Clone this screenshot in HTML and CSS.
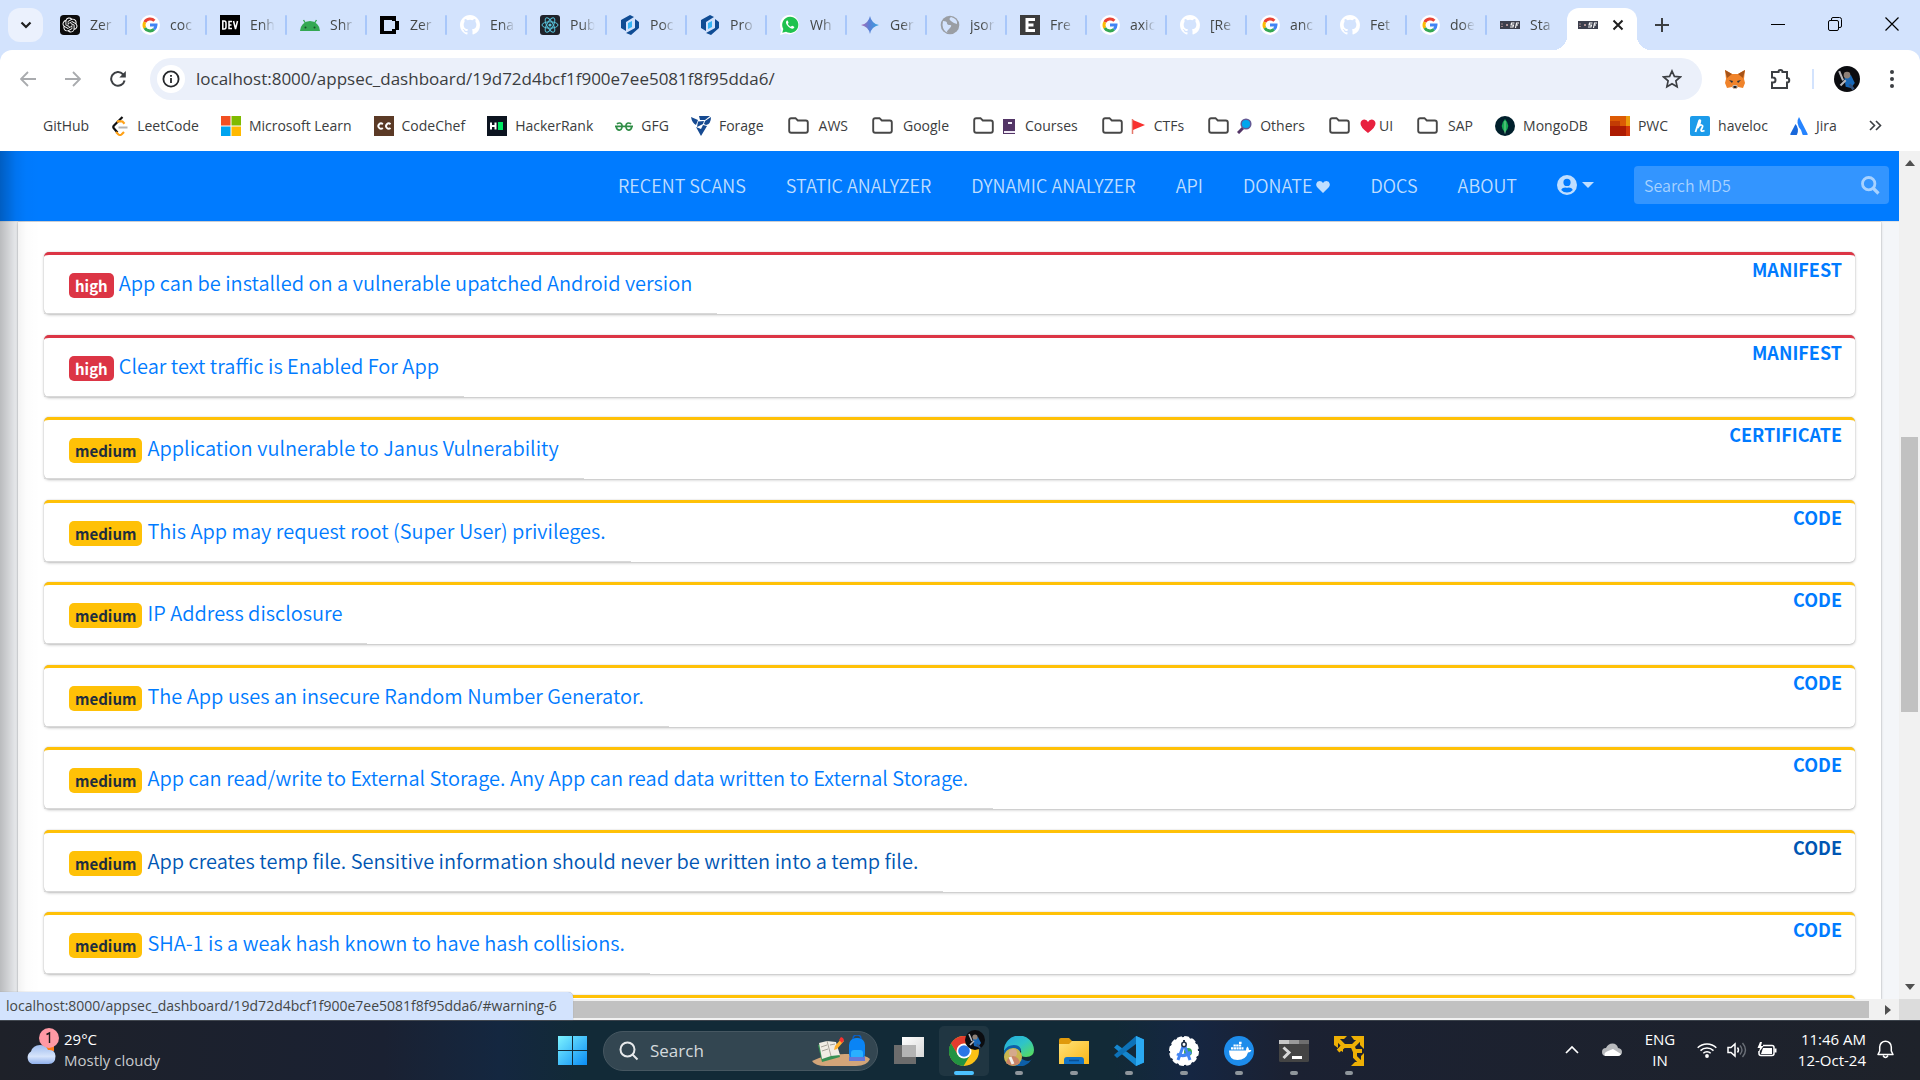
FILE: index.html
```html
<!DOCTYPE html>
<html lang="en">
<head>
<meta charset="utf-8">
<title>Static Analysis</title>
<link rel="stylesheet" href="styles.css">
</head>
<body>
<svg class="defs" aria-hidden="true">
  <defs>
    <linearGradient id="gem" x1="0" x2="1"><stop offset="0" stop-color="#b06ab3"/><stop offset=".45" stop-color="#5b7fd6"/><stop offset="1" stop-color="#35a5e0"/></linearGradient>
    <linearGradient id="win" x1="0" y1="0" x2="1" y2="1"><stop offset="0" stop-color="#7df3ff"/><stop offset="1" stop-color="#0a8cf5"/></linearGradient>
    <linearGradient id="edge" x1="0" y1="0" x2="1" y2="1"><stop offset="0" stop-color="#22a7e0"/><stop offset=".5" stop-color="#2fc4c8"/><stop offset="1" stop-color="#5ddf4c"/></linearGradient>
    <linearGradient id="fold" x1="0" y1="0" x2="1" y2="1"><stop offset="0" stop-color="#ffe27a"/><stop offset="1" stop-color="#fbb615"/></linearGradient>
    <linearGradient id="cloud" x1="0" y1="0" x2="0" y2="1"><stop offset="0" stop-color="#9fbdee"/><stop offset=".6" stop-color="#d6e4fb"/><stop offset="1" stop-color="#8fb0ec"/></linearGradient>
    <linearGradient id="tv" x1="0" y1="0" x2="1" y2="1"><stop offset="0" stop-color="#fff"/><stop offset="1" stop-color="#d8d8d8"/></linearGradient>
  </defs>
  <symbol id="google" viewBox="0 0 20 20"><circle cx="10" cy="10" r="10" fill="#fff"/><g fill="none" stroke-width="3"><path d="M14.4 5.8A6 6 0 0 0 4.8 7.1" stroke="#ea4335"/><path d="M4.8 7.1a6 6 0 0 0 0 5.8" stroke="#fbbc05"/><path d="M4.8 12.9a6 6 0 0 0 9.2 1.5" stroke="#34a853"/><path d="M10 10h6a6 6 0 0 1-2 4.4" stroke="#4285f4"/></g></symbol>
  <symbol id="github" viewBox="0 0 16 16"><path fill="#fff" d="M8 0C3.580 0 0 3.580 0 8c0 3.540 2.290 6.530 5.470 7.590.4.070.550-.170.550-.380 0-.190-.010-.820-.010-1.490-2.010.370-2.530-.490-2.690-.940-.090-.230-.480-.940-.820-1.130-.280-.150-.680-.520-.010-.530.630-.010 1.080.580 1.230.820.720 1.210 1.870.870 2.330.660.070-.520.280-.870.510-1.070-1.780-.2-3.640-.890-3.640-3.950 0-.870.310-1.590.820-2.150-.080-.2-.360-1.020.080-2.120 0 0 .670-.210 2.200.820a7.600 7.600 0 0 1 4 0c1.530-1.040 2.200-.820 2.200-.820.440 1.100.160 1.920.080 2.120.510.560.820 1.270.820 2.150 0 3.070-1.870 3.750-3.650 3.950.290.250.540.730.540 1.480 0 1.070-.010 1.930-.010 2.200 0 .210.150.460.550.380A8 8 0 0 0 16 8c0-4.420-3.580-8-8-8z"/></symbol>
  <symbol id="auth" viewBox="0 0 20 20"><path fill="#0f4c94" d="M1 5 10 0l4 2-8 5v9l-5-3zM19 13l-8 7-5-2 9-5V4l4 3z"/><path fill="#36b5f5" d="m8 8 4-2v6l-4 2z"/></symbol>
  <symbol id="mobsf" viewBox="0 0 20 8"><rect width="20" height="8" fill="#3c3f4d"/><path d="M2 2.500v1M2 5v1M6 4h2" stroke="#d6b0b0" stroke-width="1.300"/><path d="M14.500 2h-3l-.5 2h2.500l-.5 2h-3M15.500 7l1-5h2.500M16 4h2" stroke="#fff" stroke-width="1.100" fill="none"/></symbol>
  <symbol id="folder" viewBox="0 0 21 17"><path d="M1.200 3.200q0-2 2-2h4.300l2.300 2.300h8q2 0 2 2v8.300q0 2-2 2H3.200q-2 0-2-2z" fill="none" stroke="#474747" stroke-width="1.900"/></symbol>
  <symbol id="man" viewBox="0 0 20 20"><circle cx="10" cy="10" r="10" fill="#0b0c10"/><path d="M8 9l5-2 3 6-3 4-4-1z" fill="#1868b8"/><circle cx="10" cy="7" r="2.600" fill="#8d8078"/><path d="M4 4l3 7M5 15l4-4" stroke="#b8b8bd" stroke-width="1.600"/><path d="M12 14l3 4" stroke="#35537e" stroke-width="2"/></symbol>
</svg>

<header class="browser">
  <div class="tabstrip">
    <button class="tabsearch" aria-label="Search tabs"><svg width="12" height="8" viewBox="0 0 12 8"><path d="m1.500 1.500 4.500 4.500 4.500-4.500" fill="none" stroke="#1f1f1f" stroke-width="2.200"/></svg></button>
    <nav class="tabs" aria-label="Tabs">
      <button class="tab"><svg class="fav" viewBox="0 0 32 32"><rect width="32" height="32" rx="6" fill="#0c0c0c"/><path transform="translate(4 4)" fill="#fff" d="M22.2819 9.8211a5.9847 5.9847 0 0 0-.5157-4.9108 6.0462 6.0462 0 0 0-6.5098-2.9A6.0651 6.0651 0 0 0 4.9807 4.1818a5.9847 5.9847 0 0 0-3.9977 2.9 6.0462 6.0462 0 0 0 .7427 7.0966 5.98 5.98 0 0 0 .511 4.9107 6.051 6.051 0 0 0 6.5146 2.9001A5.9847 5.9847 0 0 0 13.2599 24a6.0557 6.0557 0 0 0 5.7718-4.2058 5.9894 5.9894 0 0 0 3.9977-2.9001 6.0557 6.0557 0 0 0-.7475-7.0729zm-9.022 12.6081a4.4755 4.4755 0 0 1-2.8764-1.0408l.1419-.0804 4.7783-2.7582a.7948.7948 0 0 0 .3927-.6813v-6.7369l2.02 1.1686a.071.071 0 0 1 .038.052v5.5826a4.504 4.504 0 0 1-4.4945 4.4944zm-9.6607-4.1254a4.4708 4.4708 0 0 1-.5346-3.0137l.142.0852 4.783 2.7582a.7712.7712 0 0 0 .7806 0l5.8428-3.3685v2.3324a.0804.0804 0 0 1-.0332.0615L9.74 19.9502a4.4992 4.4992 0 0 1-6.1408-1.6464zM2.3408 7.8956a4.485 4.485 0 0 1 2.3655-1.9728V11.6a.7664.7664 0 0 0 .3879.6765l5.8144 3.3543-2.0201 1.1685a.0757.0757 0 0 1-.071 0l-4.8303-2.7865A4.504 4.504 0 0 1 2.3408 7.872zm16.5963 3.8558L13.1038 8.364 15.1192 7.2a.0757.0757 0 0 1 .071 0l4.8303 2.7913a4.4944 4.4944 0 0 1-.6765 8.1042v-5.6772a.79.79 0 0 0-.407-.667zm2.0107-3.0231l-.142-.0852-4.7735-2.7818a.7759.7759 0 0 0-.7854 0L9.409 9.2297V6.8974a.0662.0662 0 0 1 .0284-.0615l4.8303-2.7866a4.4992 4.4992 0 0 1 6.6802 4.66zM8.3065 12.863l-2.02-1.1638a.0804.0804 0 0 1-.038-.0567V6.0742a4.4992 4.4992 0 0 1 7.3757-3.4537l-.142.0805L8.704 5.459a.7948.7948 0 0 0-.3927.6813zm1.0976-2.3654l2.602-1.4998 2.6069 1.4998v2.9994l-2.5974 1.4997-2.6067-1.4997Z"/></svg><span>Zer</span></button>
      <button class="tab"><svg class="fav"><use href="#google"/></svg><span>coc</span></button>
      <button class="tab"><svg class="fav" viewBox="0 0 20 20"><rect width="20" height="20" fill="#000"/><path d="M2.800 6v8h1.400q1.800 0 1.800-2V8q0-2-1.800-2zM12 6.500H9v7h3M9 10h2.500M13.500 6l2 8 2-8" fill="none" stroke="#fff" stroke-width="1.500"/></svg><span>Enh</span></button>
      <button class="tab"><svg class="fav" viewBox="0 0 20 20"><path d="M0 16a10 10 0 0 1 20 0z" fill="#34a853"/><path d="m3.500 5 2.500 4M16.500 5 14 9" stroke="#34a853" stroke-width="1.400"/><circle cx="5.500" cy="12.500" r="1" fill="#174d2a"/><circle cx="14.500" cy="12.500" r="1" fill="#174d2a"/></svg><span>Shr</span></button>
      <button class="tab"><svg class="fav" viewBox="0 0 20 20"><path fill="#000" fill-rule="evenodd" d="M0 1h16v5h3v9h-3v4H0zM4 5v11h8v-2h3V6h-3V5z"/></svg><span>Zer</span></button>
      <button class="tab"><svg class="fav"><use href="#github"/></svg><span>Ena</span></button>
      <button class="tab"><svg class="fav" viewBox="0 0 20 20"><rect width="20" height="20" rx="3" fill="#20232a"/><g fill="none" stroke="#58c4dc"><ellipse cx="10" cy="10" rx="8" ry="3.200"/><ellipse cx="10" cy="10" rx="8" ry="3.200" transform="rotate(60 10 10)"/><ellipse cx="10" cy="10" rx="8" ry="3.200" transform="rotate(120 10 10)"/></g><circle cx="10" cy="10" r="1.600" fill="#58c4dc"/></svg><span>Pub</span></button>
      <button class="tab"><svg class="fav"><use href="#auth"/></svg><span>Poc</span></button>
      <button class="tab"><svg class="fav"><use href="#auth"/></svg><span>Pro</span></button>
      <button class="tab"><svg class="fav" viewBox="0 0 20 20"><path fill="#fff" d="M10 0a9.700 9.700 0 1 1-4.500 18.600L0 20l1.500-5A9.800 9.800 0 0 1 10 0z"/><path fill="#1fc24e" d="M10 1.700a8.100 8.100 0 1 1-4 15L2.300 17.700l1-3.600A8.200 8.200 0 0 1 10 1.700z"/><path d="M6.800 5.500c-1.500 1.300-1 3.500 1.200 5.800s4.600 3.300 6 1.700c.6-.9.300-1.300-.3-1.600l-1.500-.7c-.6-.2-.8.900-1.500 1-1.300-.5-2.300-1.500-2.900-2.700.2-.7.900-.9.700-1.400L7.800 5.800c-.3-.5-.6-.5-1-.3z" fill="#fff"/></svg><span>Wh</span></button>
      <button class="tab"><svg class="fav" viewBox="0 0 20 20"><path fill="url(#gem)" d="M10 1q1.500 7.500 9 9-7.500 1.500-9 9-1.500-7.500-9-9 7.500-1.500 9-9z"/></svg><span>Ger</span></button>
      <button class="tab"><svg class="fav" viewBox="0 0 20 20"><circle cx="10" cy="10" r="9.300" fill="#9a9ea4"/><path d="M3 6q4 0 4 2t3 2-1 4-1 4Q3 16 2.500 10zM11 2q-3 2 0 4t3 2 3 1Q18 4 11 2z" fill="#d3e3fd"/></svg><span>jsor</span></button>
      <button class="tab"><svg class="fav" viewBox="0 0 20 20"><rect width="20" height="20" fill="#3c3c3c"/><path d="M15 4.500H7v11h8M7 10h6.500" stroke="#fff" stroke-width="3" fill="none"/></svg><span>Fre</span></button>
      <button class="tab"><svg class="fav"><use href="#google"/></svg><span>axic</span></button>
      <button class="tab"><svg class="fav"><use href="#github"/></svg><span>[Re</span></button>
      <button class="tab"><svg class="fav"><use href="#google"/></svg><span>anc</span></button>
      <button class="tab"><svg class="fav"><use href="#github"/></svg><span>Fet</span></button>
      <button class="tab"><svg class="fav"><use href="#google"/></svg><span>doe</span></button>
      <button class="tab last"><svg class="fav"><use href="#mobsf"/></svg><span>Sta</span></button>
      <button class="tab active" aria-label="Static Analysis"><svg class="fav"><use href="#mobsf"/></svg><svg width="12" height="12" viewBox="0 0 12 12"><path d="m1.500 1.500 9 9m0-9-9 9" stroke="#1f1f1f" stroke-width="2"/></svg></button>
    </nav>
    <button class="newtab" aria-label="New tab"><svg width="14" height="14" viewBox="0 0 14 14"><path d="M7 0v14M0 7h14" stroke="#3c3f43" stroke-width="2"/></svg></button>
    <div class="winctl">
      <button aria-label="Minimize"><svg width="14" height="14" viewBox="0 0 14 14"><path d="M0 7.500h14" stroke="#000"/></svg></button>
      <button aria-label="Restore"><svg width="14" height="14" viewBox="0 0 14 14"><path d="M3.500 3V2q0-1.500 1.500-1.500h6.500q2 0 2 2V9q0 1.500-1.500 1.500h-1" fill="none" stroke="#000"/><rect x=".5" y="3.500" width="10" height="10" rx="1.500" fill="none" stroke="#000"/></svg></button>
      <button aria-label="Close"><svg width="14" height="14" viewBox="0 0 14 14"><path d="m.5.5 13 13m0-13-13 13" stroke="#000" stroke-width="1.200"/></svg></button>
    </div>
  </div>

  <div class="toolbar">
    <button class="tool" aria-label="Back"><svg width="16" height="16" viewBox="0 0 16 16"><path d="M16 8H1.500M8 1 1 8l7 7" fill="none" stroke="#a9abae" stroke-width="1.800"/></svg></button>
    <button class="tool" aria-label="Forward"><svg width="16" height="16" viewBox="0 0 16 16"><path d="M0 8h14.500M8 1l7 7-7 7" fill="none" stroke="#a9abae" stroke-width="1.800"/></svg></button>
    <button class="tool" aria-label="Reload"><svg width="16" height="16" viewBox="0 0 16 16"><path d="M14.600 9.500A6.800 6.800 0 1 1 13 3.300l1.500 1.700" fill="none" stroke="#3c3f43" stroke-width="2"/><path d="M15.800 0v6.500H9.300z" fill="#3c3f43"/></svg></button>
    <div class="omnibox">
      <button class="siteinfo" aria-label="Site information"><svg width="18" height="18" viewBox="0 0 18 18"><circle cx="9" cy="9" r="7.600" fill="none" stroke="#26282b" stroke-width="1.800"/><path d="M9 8v5M9 5v1.800" stroke="#26282b" stroke-width="1.800"/></svg></button>
      <input class="url" aria-label="Address" value="localhost:8000/appsec_dashboard/19d72d4bcf1f900e7ee5081f8f95dda6/">
      <button class="star" aria-label="Bookmark this page"><svg width="20" height="20" viewBox="0 0 20 20"><path d="m10 2 2.400 5.400 5.900.6-4.400 3.900 1.200 5.800L10 14.700l-5.100 3 1.200-5.800L1.700 8l5.900-.6z" fill="none" stroke="#3c3f43" stroke-width="1.700"/></svg></button>
    </div>
    <div class="extensions">
      <button class="wallet" aria-label="Wallet"><svg width="22" height="20" viewBox="0 0 22 20"><path d="m1 1 7 4h6l7-4-1 9 1 4-2 5-5-1-2 2h-2l-2-2-5 1-2-5 1-4z" fill="#f0832a"/><path d="m1 1 7 4-5 4zM21 1l-7 4 5 4z" fill="#a65318"/><path d="m5 11 4 1-1 2zM17 11l-4 1 1 2z" fill="#26313e"/><path d="M9 16h4l1 2-2 2h-2l-2-2z" fill="#c9b9ac"/><path d="M9.500 17h3v2h-3z" fill="#20242b"/></svg></button>
      <button aria-label="Extensions"><svg width="22" height="22" viewBox="0 0 22 22"><path d="M2 4h6.500a2 2 0 0 1 4 0H17v6a2 2 0 0 1 0 4.500V20H2v-5.500h1a2.200 2.200 0 0 0 0-5H2z" fill="none" stroke="#3c3f43" stroke-width="2"/></svg></button>
      <span class="divider"></span>
      <button aria-label="Profile"><svg width="26" height="26"><use href="#man"/></svg></button>
      <button class="menu" aria-label="Menu"><svg width="6" height="20" viewBox="0 0 6 20"><g fill="#3c3f43"><circle cx="3" cy="3" r="2"/><circle cx="3" cy="10" r="2"/><circle cx="3" cy="17" r="2"/></g></svg></button>
    </div>
  </div>

  <nav class="bookmarks" aria-label="Bookmarks">
    <a href="#">GitHub</a>
    <a href="#"><svg width="18" height="20" viewBox="0 0 18 20"><path d="M11.500 1 3 9.500q-1.500 1.500 0 3l3.500 4" fill="none" stroke="#111" stroke-width="2.200"/><path d="m6 6 1.500-.8 4 .3 2 2.300M5 16l2.500 2.500q1.500 1.200 3 0l2.500-2.500" fill="none" stroke="#ffa116" stroke-width="2.200"/><path d="M7.500 11.500h9" stroke="#b3b3b3" stroke-width="2"/></svg>LeetCode</a>
    <a href="#"><svg width="20" height="20" viewBox="0 0 20 20"><path fill="#f25022" d="M0 0h9.500v9.500H0z"/><path fill="#7fba00" d="M10.500 0H20v9.500h-9.500z"/><path fill="#00a4ef" d="M0 10.500h9.500V20H0z"/><path fill="#ffb900" d="M10.500 10.500H20V20h-9.500z"/></svg>Microsoft Learn</a>
    <a href="#"><svg width="20" height="20" viewBox="0 0 20 20"><path fill="#5b3a26" d="M0 0h20v20H0z"/><path d="M8.800 8.200a2.600 2.600 0 1 0 0 3.800M16.500 8.200a2.600 2.600 0 1 0 0 3.800" fill="none" stroke="#fff" stroke-width="1.900"/></svg>CodeChef</a>
    <a href="#"><svg width="20" height="20" viewBox="0 0 20 20"><path fill="#0c1420" d="M0 0h20v20H0z"/><path d="M4 6.500v7M8.500 6.500v7M4 10h4.500" stroke="#fff" stroke-width="2"/><path fill="#00ea64" d="M11 6h5v8h-5z"/></svg>HackerRank</a>
    <a href="#"><svg width="18" height="20" viewBox="0 0 20 20"><path d="M0 10.500h20M2 7.500q5.500-2.500 6 2.500-.5 5-3.500 4.500Q1.500 14 1.500 10.500M18 7.500q-5.500-2.500-6 2.500.5 5 3.500 4.500 3-.5 3-4" fill="none" stroke="#2f8d46" stroke-width="1.900"/></svg>GFG</a>
    <a href="#"><svg width="20" height="20" viewBox="0 0 20 20"><path fill="#164a91" d="M0 1 7 4 5 9Q1 7 0 1zM8 0h11l-5 4-5 0zM7 5.500l6-.5-1 3-6 3zM14 5l6-4q0 7-5 8l-2-1zM5 11l5 2 2-4 4 1-6 10z"/></svg>Forage</a>
    <a href="#" class="dir"><svg width="21" height="17"><use href="#folder"/></svg>AWS</a>
    <a href="#" class="dir"><svg width="21" height="17"><use href="#folder"/></svg>Google</a>
    <a href="#" class="dir emo"><svg width="21" height="17"><use href="#folder"/></svg><svg width="15" height="16" viewBox="0 0 15 16"><path fill="#533566" d="M1 1h12v15H1z"/><path fill="#f0eaf5" d="M6 4h4v2H6zM2 13h11v2H2z"/></svg>Courses</a>
    <a href="#" class="dir emo"><svg width="21" height="17"><use href="#folder"/></svg><svg width="15" height="16" viewBox="0 0 15 16"><path d="M1.500 1v15" stroke="#e5776a" stroke-width="1.500"/><path fill="#f8312f" d="m2 2 12 5-12 5z"/></svg>CTFs</a>
    <a href="#" class="dir emo"><svg width="21" height="17"><use href="#folder"/></svg><svg width="15" height="16" viewBox="0 0 15 16"><path d="m1 15 5-5" stroke="#533566" stroke-width="3"/><circle cx="9" cy="6" r="4.800" fill="#00a6ed" stroke="#635994" stroke-width="1.500"/></svg>Others</a>
    <a href="#" class="dir heart"><svg width="21" height="17"><use href="#folder"/></svg><span><svg width="16" height="14" viewBox="0 0 16 14"><path fill="#e8213f" d="M8 14Q0 8 .5 4 1.200.5 4.500.5 7 .5 8 3q1-2.500 3.500-2.500 3.300 0 4 3.500Q16 8 8 14z"/></svg>UI</span></a>
    <a href="#" class="dir"><svg width="21" height="17"><use href="#folder"/></svg>SAP</a>
    <a href="#"><svg width="20" height="20" viewBox="0 0 20 20"><circle cx="10" cy="10" r="10" fill="#01202c"/><path d="M10 3q6.500 7 0 13.500Q3.500 10 10 3z" fill="#13aa52"/><path d="M10 5v12.500" stroke="#9ed8a8" stroke-width=".8"/></svg>MongoDB</a>
    <a href="#"><svg width="20" height="20" viewBox="0 0 20 20"><path fill="#dc5a04" d="M0 0h20v20H0z"/><path fill="#eb9b0b" d="M16 0h4v10h-4z"/><path fill="#ad1b02" d="M0 10h16v10H0z"/><path fill="#c33c04" d="M0 5h10v5H0z"/><path fill="#d3370a" d="M16 10h4v10h-4z"/></svg>PWC</a>
    <a href="#"><svg width="20" height="20" viewBox="0 0 20 20"><rect width="20" height="20" rx="2" fill="#1c9bea"/><path d="M5.500 16 9 5q.7-1.500 1.300-.5Q10.500 7 7.500 12q2-3.500 4-3t.5 3-.5 3 3-.5" fill="none" stroke="#fff" stroke-width="1.800"/></svg>haveloc</a>
    <a href="#"><svg width="18" height="18" viewBox="0 0 18 18"><path fill="#2684ff" d="M9 0q-4 6 2 13l1.500 4.500q.3.500 1 .5H17q1 0 .7-1z"/><path fill="#1868db" d="M5.500 7q4 4.500 1.500 10.500-.3.500-1 .5H1q-1 0-.7-1z"/></svg>Jira</a>
    <button class="more" aria-label="More bookmarks"><svg width="13" height="11" viewBox="0 0 13 11"><path d="m1 1 4.500 4.500L1 10M7 1l4.500 4.500L7 10" fill="none" stroke="#3c3f43" stroke-width="1.600"/></svg></button>
  </nav>
</header>

<div class="viewport">
  <main class="page">
    <nav class="navbar">
      <a href="#">RECENT SCANS</a>
      <a href="#">STATIC ANALYZER</a>
      <a href="#">DYNAMIC ANALYZER</a>
      <a href="#">API</a>
      <a href="#">DONATE <svg width="14" height="12" viewBox="0 0 14 12"><path fill="currentColor" d="M7 12 1 6Q0 4.500.2 3 .8.2 3.500 0 6 0 7 2 8 0 10.500 0q2.700.2 3.300 3 .2 1.500-.8 3z"/></svg></a>
      <a href="#">DOCS</a>
      <a href="#">ABOUT</a>
      <a href="#" class="account" aria-label="Account"><svg width="20" height="20" viewBox="0 0 20 20"><path fill="currentColor" fill-rule="evenodd" d="M10 0a10 10 0 1 0 0 20 10 10 0 0 0 0-20zm0 3.800a3.600 3.600 0 1 1 0 7.200 3.600 3.600 0 0 1 0-7.200zm0 13.800a7.600 7.600 0 0 1-5.800-2.700c.9-1.600 2.400-2.400 4-2.400q1.800.6 3.600 0c1.600 0 3.100.8 4 2.400a7.600 7.600 0 0 1-5.800 2.700z"/></svg><svg width="12" height="6" viewBox="0 0 12 6"><path fill="currentColor" d="M0 0h12L6 6z"/></svg></a>
      <form class="search"><input type="search" placeholder="Search MD5" aria-label="Search MD5"><button type="button" aria-label="Search"><svg width="19" height="19" viewBox="0 0 19 19"><circle cx="7.700" cy="7.700" r="6.200" fill="none" stroke="currentColor" stroke-width="2.800"/><path d="m12.500 12.500 5 5" stroke="currentColor" stroke-width="3.200"/></svg></button></form>
    </nav>
    <section class="panel">
      <div class="findings">
        <a href="#" class="finding high"><span class="title"><b>high</b>App can be installed on a vulnerable upatched Android version</span><span class="kind">MANIFEST</span></a>
        <a href="#" class="finding high"><span class="title"><b>high</b>Clear text traffic is Enabled For App</span><span class="kind">MANIFEST</span></a>
        <a href="#" class="finding"><span class="title"><b>medium</b>Application vulnerable to Janus Vulnerability</span><span class="kind">CERTIFICATE</span></a>
        <a href="#" class="finding"><span class="title"><b>medium</b>This App may request root (Super User) privileges.</span><span class="kind">CODE</span></a>
        <a href="#" class="finding"><span class="title"><b>medium</b>IP Address disclosure</span><span class="kind">CODE</span></a>
        <a href="#" class="finding"><span class="title"><b>medium</b>The App uses an insecure Random Number Generator.</span><span class="kind">CODE</span></a>
        <a href="#" class="finding"><span class="title"><b>medium</b>App can read/write to External Storage. Any App can read data written to External Storage.</span><span class="kind">CODE</span></a>
        <a href="#" class="finding hovered"><span class="title"><b>medium</b>App creates temp file. Sensitive information should never be written into a temp file.</span><span class="kind">CODE</span></a>
        <a href="#" class="finding"><span class="title"><b>medium</b>SHA-1 is a weak hash known to have hash collisions.</span><span class="kind">CODE</span></a>
        <div class="finding"></div>
      </div>
    </section>
    <div class="edge-shade"></div>
  </main>
  <div class="vscroll"><svg width="10" height="6" viewBox="0 0 10 6"><path d="M0 6h10L5 0z" fill="#505050"/></svg><div class="track"><i></i></div><svg width="10" height="6" viewBox="0 0 10 6"><path d="M0 0h10L5 6z" fill="#505050"/></svg></div>
  <div class="hscroll"><i></i><svg width="6" height="10" viewBox="0 0 6 10"><path d="M0 0v10l6-5z" fill="#505050"/></svg></div>
  <div class="corner"></div>
  <div class="status">localhost:8000/appsec_dashboard/19d72d4bcf1f900e7ee5081f8f95dda6/#warning-6</div>
</div>

<footer class="taskbar">
  <button class="weather">
    <svg width="36" height="46" viewBox="0 0 36 46"><path d="M20 16h9v8h-9z" fill="#ff7a1a"/><path d="M7 37a7 7 0 0 1-1-12.500Q8 18 15 18q6 0 8 5 7-1 7.500 6 0 8-7 8z" fill="url(#cloud)"/><circle cx="24" cy="11" r="10" fill="#ff99a4"/><path d="m21.500 7.500 3-1.500v10" fill="none" stroke="#1a1a1a" stroke-width="1.400"/></svg>
    <span>29°C<small>Mostly cloudy</small></span>
  </button>
  <div class="apps">
    <button class="app start" aria-label="Start"><svg width="30" height="30" viewBox="0 0 30 30"><path fill="url(#win)" d="M0 0h14v14H0zM15 0h14v14H15zM0 15h14v14H0zM15 15h14v14H15z"/></svg></button>
    <label class="tasksearch"><svg width="20" height="20" viewBox="0 0 20 20"><circle cx="8.500" cy="8.500" r="7" fill="none" stroke="#e8eaec" stroke-width="2"/><path d="m13.500 13.500 5 5" stroke="#e8eaec" stroke-width="2"/></svg><input type="text" placeholder="Search" aria-label="Search">
      <svg width="58" height="32" viewBox="0 0 58 32"><path d="M0 26q15-8 38-7 17 1 20 5-3 7-14 7H14Q3 31 0 26z" fill="#d3a579"/><path d="m6 10 10-3 8 2 4 13-18 5z" fill="#379154"/><path d="m7 8 8-2 9 1 4 13-9 1-9 3z" fill="#f0ece4"/><path d="m15 6 4 15M9 12l6-2M10 16l6-2M18 10l5-1" stroke="#a8a399" fill="none"/><path d="m22 15 1-4 6-7 3 2-7 8z" fill="#ffb02e"/><path d="m27 5 2-3 2 1 1 2-2 3z" fill="#f8312f"/><rect x="37" y="3" width="16" height="23" rx="7" fill="#0a84f5"/><path d="M41 4q0-4 4-4t4 4" stroke="#0860c8" stroke-width="1.500" fill="none"/><rect x="39" y="15" width="12" height="9" rx="3" fill="#2ab0ff"/><path d="M37 22h16v4H37z" fill="#6478d8"/></svg>
    </label>
    <button class="app view" aria-label="Task view"><svg width="30" height="30" viewBox="0 0 30 30"><path fill="#6c6c6c" d="M0 9h22v19H0z"/><path fill="url(#tv)" d="M8 1h22v20H8z"/><path fill="#b4b4b4" d="M8 9h14v12H8z"/></svg></button>
    <button class="app current" aria-label="Chrome"><svg width="36" height="36" viewBox="0 0 36 36"><circle cx="15" cy="21" r="15" fill="#fbc116"/><path d="M2 13.500a15 15 0 0 1 26 0H15z" fill="#e33b2e"/><path d="M2 13.500a15 15 0 0 0 12.500 22.500l7-11.500L9 25z" fill="#229342"/><path d="M2 13.500 9 25h6V13.500L7 9z" fill="#e33b2e"/><path d="M2 13.500 8.500 24.700l4 2.300-1 8.600A15 15 0 0 1 2 13.500z" fill="#229342"/><circle cx="15" cy="21" r="7.500" fill="#fff"/><circle cx="15" cy="21" r="5.800" fill="#2a76e6"/><use href="#man" x="16" y="0" width="20" height="20"/></svg></button>
    <button class="app" aria-label="Edge"><svg width="30" height="30" viewBox="0 0 30 30"><path d="M0 15a15 15 0 0 1 30-1q0 7-8 7-6 0-5-4 1-6-5-6-8 0-12 4z" fill="url(#edge)"/><path d="M0 15q3-6 10-6 6 0 7 5-6 5 1 9t10 0a15 15 0 0 1-28-8z" fill="#0d5fa8"/><circle cx="9" cy="21" r="9" fill="#c9b650"/><circle cx="9" cy="17" r="4" fill="#d5a98c"/><path d="M2 27q2-7 7-7t7 7q-6 5-14 0z" fill="#c98467"/><path d="m6 21 3 7" stroke="#f2efe8" stroke-width="3"/></svg></button>
    <button class="app" aria-label="File Explorer"><svg width="30" height="30" viewBox="0 0 30 30"><path d="M0 4q0-2 2-2h8l3 3v4H0z" fill="#e09a0c"/><path d="M0 8h10l3-3h17v23H0z" fill="url(#fold)"/><path d="M5 28v-4q0-3 3-3h14q3 0 3 3v4z" fill="#1173c8"/><path d="M10 24.500h10" stroke="#0a4f93" stroke-width="1.500"/></svg></button>
    <button class="app" aria-label="Visual Studio Code"><svg width="30" height="30" viewBox="0 0 30 30"><path d="m22 0 8 3.500v23L22 30 0 11.500 3 8.500l19 14z" fill="#1587cf"/><path d="M22 0v8L3 22 0 19z" fill="#0d72b8"/><path d="m22 0 8 3.500v23L22 30z" fill="#2aa9f2"/></svg></button>
    <button class="app" aria-label="Android Studio"><svg width="30" height="30" viewBox="0 0 30 30"><circle cx="15" cy="15" r="14" fill="#fff"/><circle cx="15" cy="15" r="14" fill="none" stroke="#fff" stroke-width="2" stroke-dasharray="5 2.300"/><circle cx="19" cy="16" r="4" fill="#34a853"/><path d="m15 8-6 16M15 8l6 16M8 18q7 4 14-2" stroke="#4285f4" stroke-width="3" fill="none"/><circle cx="15" cy="8.500" r="2.200" fill="#fff" stroke="#26354a" stroke-width="1.600"/><path d="M15 4v3" stroke="#26354a" stroke-width="2"/></svg></button>
    <button class="app" aria-label="Docker"><svg width="30" height="30" viewBox="0 0 30 30"><circle cx="15" cy="15" r="15" fill="#1d8ceb"/><path d="M5 14.500h17q0-3 1.500-4 1.500 1.500 1.500 3.500h2.500q-1 2.500-3.500 2.500-2 7.500-10.500 7.500Q5 24 5 14.500z" fill="#fff"/><path d="M7 12.300h12.500M9.500 9.500h8M15 6.800h3" stroke="#fff" stroke-width="2.200" stroke-dasharray="2.300 .4"/></svg></button>
    <button class="app" aria-label="Terminal"><svg width="30" height="30" viewBox="0 0 30 30"><rect y="4" width="30" height="22" rx="1.500" fill="#444"/><path fill="#c8c8c8" d="M0 4h10v4H0z"/><path fill="#999" d="M10 4h10v4H10z"/><path fill="#6e6e6e" d="M20 4h10v4H20z"/><path d="m4.500 11.500 5.500 5-5.500 5.500" fill="none" stroke="#d8d8d8" stroke-width="3"/><path d="M13 21.500h10" stroke="#fff" stroke-width="3"/></svg></button>
    <button class="app" aria-label="Virtual machines"><svg width="30" height="30" viewBox="0 0 30 30"><g fill="none" stroke="#eeb005" stroke-width="4"><path d="m3 3 7 7h9l8-8M10 10l-6 5M18 9l3 7v5l7 7M19 15h9"/></g><path fill="#eeb005" d="M0 0h13l-3 3H4v9l-4-3zM17 0h13v13l-4-4V4h-6zM30 17v13H17l4-4h6v-6zM9 6v10l-5-3z"/></svg></button>
  </div>
  <div class="tray">
    <button class="up" aria-label="Show hidden icons"><svg width="14" height="9" viewBox="0 0 14 9"><path d="m1 8 6-6 6 6" fill="none" stroke="#fff" stroke-width="1.700"/></svg></button>
    <button class="drive" aria-label="OneDrive"><svg width="20" height="14" viewBox="0 0 20 14"><path d="M4 13a4 4 0 0 1 0-8q2-4.500 6.500-4.500T16 5q4 .5 4 4t-4 4z" fill="#b8babd"/><path d="M3 13q-2-3 3-5l5-2 8 5q-1 2-3 2z" fill="#fff"/></svg></button>
    <span class="lang">ENG<br>IN</span>
    <button class="sys" aria-label="Network, sound and battery">
      <svg width="20" height="16" viewBox="0 0 20 16"><g fill="none" stroke="#fff" stroke-width="1.500"><path d="M.7 5.800a13 13 0 0 1 18.600 0M3.500 8.600a9.200 9.200 0 0 1 13 0M6.300 11.300a5.200 5.200 0 0 1 7.400 0"/></g><circle cx="10" cy="14" r="1.900" fill="#fff"/></svg>
      <svg width="20" height="16" viewBox="0 0 20 16"><path d="M1 5.500h3L8 2v12l-4-3.500H1z" fill="none" stroke="#fff" stroke-width="1.500"/><path d="M10.500 5.500q2 2.500 0 5" fill="none" stroke="#fff" stroke-width="1.400"/><path d="M13 3.500q4 4.500 0 9M15.500 1q6 7 0 14" fill="none" stroke="#6b7078" stroke-width="1.400"/></svg>
      <svg width="20" height="16" viewBox="0 0 20 16"><path d="M6 3.500h9q2 0 2 2v6q0 2-2 2H4q-2 0-2-2V9" fill="none" stroke="#fff" stroke-width="1.500"/><path d="M6 6h9v6H4z" fill="#fff"/><path d="M17.500 6.500h2v4h-2z" fill="#fff"/><path d="M3 0 .5 6H3L1.500 11 6.500 4H4l1-4z" fill="#fff"/></svg>
    </button>
    <button class="clock">11:46 AM<br>12-Oct-24</button>
    <button class="bell" aria-label="Notifications"><svg width="17" height="19" viewBox="0 0 17 19"><path d="M1 14.500 2.700 11V7a5.800 5.800 0 0 1 11.600 0v4l1.700 3.500z" fill="none" stroke="#fff" stroke-width="1.500" stroke-linejoin="round"/><path d="M6 15.500q2.500 4 5 0" fill="none" stroke="#fff" stroke-width="1.500"/></svg></button>
  </div>
</footer>
</body>
</html>
```
FILE: styles.css
```css
* { box-sizing: border-box; }
body {
  margin: 0;
  height: 100vh;
  display: flex;
  flex-direction: column;
  overflow: hidden;
  font: 14px/20px "Open Sans", "Noto Sans", sans-serif;
  color: #1f1f1f;
}
button { margin: 0; padding: 0; border: 0; background: none; font: inherit; color: inherit; }
input { min-width: 0; padding: 0; border: 0; outline: 0; background: none; font: inherit; color: inherit; }
a { color: inherit; text-decoration: none; }
svg { flex: none; }
.defs { position: absolute; width: 0; height: 0; }

/* Browser chrome */
.browser { background: #d3e3fd; }
.tabstrip { display: flex; height: 50px; padding-left: 8px; }
.tabsearch { width: 35px; height: 34px; margin: 8px 4px 0 0; border-radius: 12px; background: #ebf1fd; }
.tabsearch svg { display: block; margin: auto; }
.tabs { display: flex; flex: none; }
.tab { flex: none; display: flex; align-items: center; width: 80px; height: 50px; padding-left: 13px; color: #444746; }
.tab .fav { width: 20px; height: 20px; margin-right: 10px; }
.tab span { width: 30px; margin-right: 5px; text-align: left; white-space: nowrap; mask-image: linear-gradient(90deg, #000 12px, transparent 25px); }
.tab::after { content: ""; flex: none; width: 2px; height: 20px; border-radius: 1px; background: #a8c7fa; }
.tab.last::after { visibility: hidden; }
.tab.active { position: relative; width: 70px; height: 42px; margin-top: 8px; padding: 0 0 8px 11px; border-radius: 12px 12px 0 0; background: #fff; }
.tab.active .fav { margin-right: 14px; }
.tab.active::before, .tab.active::after {
  content: ""; position: absolute; bottom: 0; width: 14px; height: 14px; border-radius: 0;
  background: radial-gradient(circle at 0 0, transparent 14px, #fff 14px);
}
.tab.active::before { left: -14px; }
.tab.active::after { right: -14px; background: radial-gradient(circle at 100% 0, transparent 14px, #fff 14px); }
.newtab { width: 50px; }
.newtab svg { display: block; margin: auto; }
.winctl { display: flex; margin-left: auto; }
.winctl button { width: 57px; padding-bottom: 2px; }
.winctl svg { display: block; margin: auto; }

.toolbar { display: flex; align-items: center; height: 58px; padding: 0 25px 0 5px; border-radius: 12px 12px 0 0; background: #fff; }
.tool { width: 45px; height: 45px; }
.tool svg { display: block; margin: auto; }
.omnibox { flex: 1; display: flex; align-items: center; height: 42px; margin-left: 10px; padding: 0 20px 0 7px; border-radius: 21px; background: #ebf0fa; }
.siteinfo { display: grid; place-items: center; width: 28px; height: 28px; border-radius: 14px; background: #fff; }
.url { flex: 1; margin-left: 11px; font-size: 17px; color: #3b3d40; }
.star svg { display: block; }
.extensions { display: flex; align-items: center; gap: 20px; margin-left: 22px; }
.extensions svg { display: block; }
.wallet { margin-right: 4px; }
.menu { margin-left: 9px; }
.divider { width: 2px; height: 20px; background: #d3e3fd; }

.bookmarks { display: flex; align-items: center; justify-content: space-between; height: 43px; padding: 0 38px 8px 43px; background: #fff; color: #3b3d40; white-space: nowrap; }
.bookmarks a { display: flex; align-items: center; gap: 8px; }
.bookmarks .dir { gap: 10px; padding-left: 2px; }
.bookmarks .emo { gap: 8px; }
.heart span { display: flex; align-items: center; gap: 3px; }
.more { margin-left: 10px; }

/* Dashboard page */
.viewport { position: relative; flex: 1; min-height: 0; display: grid; grid-template: minmax(0, 1fr) 21px / minmax(0, 1fr) 21px; background: #fff; }
.page { position: relative; display: flex; flex-direction: column; overflow: hidden; background: #f4f6f9; font-family: "Noto Sans CJK SC", sans-serif; font-weight: 350; }
.navbar { flex: none; display: flex; align-items: center; justify-content: flex-end; height: 71px; padding: 0 10px 2px 0; border-bottom: 1px solid #dee2e6; background: #007bff; color: #bfdeff; font-size: 18px; }
.navbar > a { padding: 0 20px; }
.account { display: flex; align-items: center; gap: 5px; }
.search { display: flex; align-items: center; width: 255px; height: 38px; margin-left: 20px; padding: 0 9px 0 10px; border-radius: 4px; background: #3395ff; color: #a8d2ff; font-size: 16px; }
.search input { flex: 1; }
.search input::placeholder { color: #a8d2ff; opacity: 1; }
.search svg { display: block; }
.panel { flex: 1; min-height: 0; display: flex; flex-direction: column; margin: 0 18px; padding: 30px 26px 0; background: #fff; box-shadow: 0 0 1px rgba(0, 0, 0, .3), 0 1px 3px rgba(0, 0, 0, .2); }
.findings { flex: 1; display: flex; flex-direction: column; justify-content: space-between; margin-bottom: -58px; }
.finding { flex: none; display: flex; align-items: flex-start; justify-content: space-between; height: 62px; border-top: 3px solid #ffc107; border-radius: 5px; background: #fff; box-shadow: 0 0 1px rgba(0, 0, 0, .25), 0 1px 3px rgba(0, 0, 0, .25); color: #007bff; }
.finding.high { border-top-color: #dc3545; }
.finding.hovered { color: #0056b3; }
.title { display: flex; align-items: center; height: 59px; padding: 0 25px 2px; border-bottom: 1px solid #d8d8d8; font-size: 20px; line-height: 24px; }
.title b { margin: 5px 5px 0 0; padding: 0 6px; border-radius: 5px; background: #ffc107; color: #1f2d3d; font-size: 15px; line-height: 25px; }
.high b { background: #dc3545; color: #fff; }
.kind { padding: 4px 13px; font-size: 18px; font-weight: 700; line-height: 20px; }
.edge-shade { position: absolute; inset: 0 auto 0 0; width: 40px; background: linear-gradient(90deg, rgba(0, 0, 0, .24), rgba(0, 0, 0, .06) 16px, rgba(0, 0, 0, .01) 26px, transparent); }

.vscroll { display: flex; flex-direction: column; align-items: center; padding: 9px 0; background: #f1f1f1; }
.track { flex: 1; align-self: stretch; padding: 0 2px; }
.track i { display: block; height: 275px; margin-top: 271px; background: #c1c1c1; }
.hscroll { display: flex; align-items: center; padding-right: 8px; background: #f1f1f1; }
.hscroll i { flex: 1; height: 17px; margin-right: 16px; background: #c1c1c1; }
.corner { background: #dcdcdc; }
.status { position: absolute; left: 0; bottom: 0; height: 28px; padding: 0 16px 0 6px; border-radius: 0 5px 0 0; background: #d3e3fd; box-shadow: 0 0 1px #888; color: #444746; font-size: 14px; line-height: 28px; }

/* Taskbar */
.taskbar { flex: none; display: grid; grid-template-columns: 1fr auto 1fr; align-items: center; height: 60px; padding-left: 2px; border-top: 1px solid #3b424b; background: linear-gradient(90deg, #1e2129, #1a2132 20%, #142740 26%, #122a37 30%, #122a37 58%, #152642 62%, #1b2132 67%, #1e222a); color: #fff; line-height: 21px; }
.weather { display: flex; align-items: center; justify-self: start; padding: 0 0 2px 23px; text-align: left; font-size: 15px; }
.weather span { margin-left: 3px; }
.weather small { display: block; font-size: 15px; color: #c8cacd; }
.apps { display: flex; align-items: center; }
.app { position: relative; display: grid; place-items: center; width: 50px; height: 50px; margin-right: 5px; border-radius: 5px; }
.app:last-child { margin-right: 0; }
.app::after { content: ""; position: absolute; bottom: 1px; width: 8px; height: 4px; border-radius: 2px; background: #8f969c; }
.start::after, .view::after { display: none; }
.current { padding: 0 0 6px 6px; background: #203642; }
.current::after { left: 15px; width: 20px; background: #4cc2ff; }
.tasksearch { display: flex; align-items: center; width: 275px; height: 40px; margin-right: 6px; padding: 0 7px 0 15px; border: 1px solid #465761; border-radius: 20px; background: #334651; font-size: 17px; }
.tasksearch input { flex: 1; margin-left: 11px; }
.tasksearch input::placeholder { color: #d5dadd; opacity: 1; }
.tray { display: flex; align-items: center; justify-self: end; padding: 0 26px 2px 0; font-size: 15px; }
.tray svg { display: block; }
.drive { margin-left: 23px; }
.lang { width: 36px; margin-left: 20px; text-align: center; }
.sys { display: flex; gap: 10px; margin-left: 19px; }
.clock { width: 80px; margin-left: 9px; text-align: right; white-space: nowrap; }
.bell { margin-left: 11px; }
```
